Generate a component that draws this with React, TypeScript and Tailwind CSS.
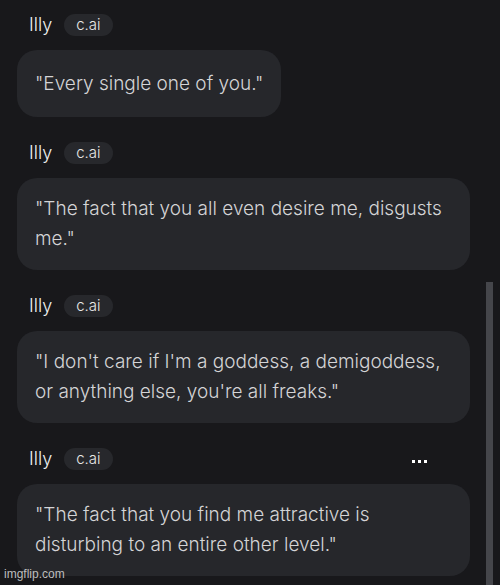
import React from "react";

const messages = [
  { text: '"Every single one of you."', dots: false },
  { text: '"The fact that you all even desire me, disgusts me."', dots: false },
  { text: '"I don\'t care if I\'m a goddess, a demigoddess, or anything else, you\'re all freaks."', dots: false },
  { text: '"The fact that you find me attractive is disturbing to an entire other level."', dots: true },
];

function Message({ text, dots }: { text: string; dots: boolean }) {
  return (
    <div className="flex flex-col gap-[14px]">
      <div className="flex h-[22px] items-center pl-[12px]">
        <span className="text-[18px] font-light leading-[22px] text-[#f0f0f0]">Illy</span>
        <span className="ml-[12px] flex h-[22px] items-center rounded-full bg-[#27282c] px-[12px] text-[15px] font-light text-[#e8e8e8]">
          c.ai
        </span>
        {dots && (
          <span className="ml-auto mr-[59px] mt-[5px] flex gap-[3px]">
            <span className="h-[3px] w-[3px] bg-white" />
            <span className="h-[3px] w-[3px] bg-white" />
            <span className="h-[3px] w-[3px] bg-white" />
          </span>
        )}
      </div>
      <div className="flex min-h-[67px] w-fit max-w-[453px] items-center rounded-[20px] bg-[#26272b] px-[18px] py-[16px] text-[19px] font-light leading-[30px] text-[#d4d4d6]">
        <span>{text}</span>
      </div>
    </div>
  );
}

export default function App() {
  return (
    <div
      className="relative flex h-[585px] w-[500px] overflow-hidden bg-[#18181b]"
      style={{ fontFamily: "Inter, 'Noto Sans', sans-serif" }}
    >
      <div className="flex w-[486px] flex-col gap-[25px] pl-[17px] pt-[14px]">
        {messages.map((m, i) => (
          <Message key={i} text={m.text} dots={m.dots} />
        ))}
      </div>
      <div className="flex w-[7px] flex-col pt-[282px]">
        <div className="flex-1 bg-[#45464b]" />
      </div>
      <span
        className="absolute bottom-[2px] left-[4px] text-[12px] text-[#bdbdbd]"
        style={{ fontFamily: "'Liberation Sans', Arial, sans-serif" }}
      >
        imgflip.com
      </span>
    </div>
  );
}
